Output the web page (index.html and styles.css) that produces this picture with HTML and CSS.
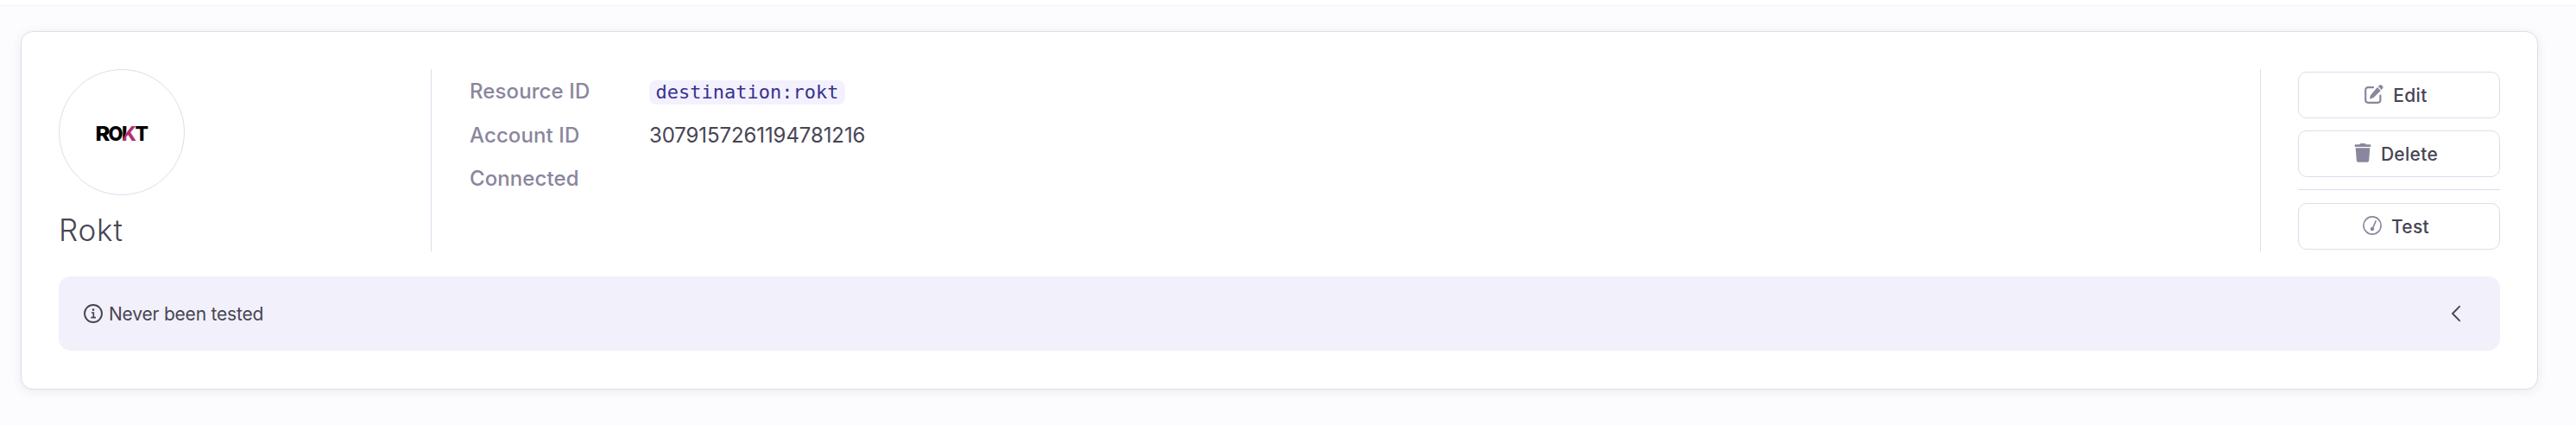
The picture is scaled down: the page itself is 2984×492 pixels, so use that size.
FILE: index.html
```html
<!DOCTYPE html>
<html lang="en">
<head>
    <meta charset="UTF-8">
    <meta name="viewport" content="width=device-width, initial-scale=1.0">
    <title>Rokt</title>
    <link rel="stylesheet" href="styles.css">
</head>
<body>
    <div class="topbar"></div>
    <div class="card">
        <div class="overview">
            <div class="identity">
                <div class="logo">
                    <svg width="80" height="40" viewBox="0 0 80 40">
                        <defs>
                            <linearGradient id="k" gradientUnits="userSpaceOnUse" x1="42" y1="18" x2="53" y2="22">
                                <stop offset="0" stop-color="#000"/>
                                <stop offset="0.24" stop-color="#000"/>
                                <stop offset="0.34" stop-color="#b0306e"/>
                            </linearGradient>
                        </defs>
                        <text class="logo-text" x="9.500" y="29.500" textLength="17" lengthAdjust="spacingAndGlyphs">R</text>
                        <text class="logo-text" x="24.500" y="29.500" textLength="17" lengthAdjust="spacingAndGlyphs">O</text>
                        <text class="logo-text" x="40" y="29.500" textLength="17" lengthAdjust="spacingAndGlyphs" fill="url(#k)">K</text>
                        <text class="logo-text" x="55.500" y="29.500" textLength="15.500" lengthAdjust="spacingAndGlyphs">T</text>
                    </svg>
                </div>
                <h1>Rokt</h1>
            </div>
            <div class="details">
                <div class="row">
                    <span class="label">Resource ID</span>
                    <code>destination:rokt</code>
                </div>
                <div class="row">
                    <span class="label">Account ID</span>
                    <span class="value">3079157261194781216</span>
                </div>
                <div class="row">
                    <span class="label">Connected</span>
                </div>
            </div>
            <div class="actions">
                <button>
                    <svg width="22" height="22" viewBox="0 0 22 22">
                        <path d="M10 3.200H4.200A3 3 0 0 0 1.200 6.200V17.800a3 3 0 0 0 3 3H15.400a3 3 0 0 0 3-3V12.500" fill="none" stroke="currentColor" stroke-width="2.200" stroke-linecap="round"/>
                        <path d="M14.800 3.100l4 4-8 7.700q-1.700 1.200-4.800 1.700q.4-3.500 1.600-5z"/>
                        <path d="M15.800 2.100l1.100-1.100a2.400 2.400 0 0 1 3.400 0l.4.4a2.400 2.400 0 0 1 0 3.400l-1 1.100z"/>
                    </svg>
                    <span>Edit</span>
                </button>
                <button>
                    <svg width="20" height="22" viewBox="0 0 20 22">
                        <path d="M1.500 1.300H6L7 .3Q7.300 0 8 0H12Q12.700 0 13 .3L14 1.300H18.500Q19.300 1.300 19.300 2.200V3.200Q19.300 4 18.500 4H1.500Q.7 4 .7 3.200V2.200Q.7 1.300 1.500 1.300zM1.700 5.300H18.300L17.200 19.800Q17 21.800 15 21.800H5Q3 21.800 2.800 19.800z"/>
                    </svg>
                    <span>Delete</span>
                </button>
                <div class="separator"></div>
                <button>
                    <svg width="22" height="22" viewBox="0 0 22 22">
                        <circle cx="11" cy="11" r="10.100" fill="none" stroke="currentColor" stroke-width="1.600"/>
                        <path d="M11.500 14.500L15 6" stroke="currentColor" stroke-width="1.700" stroke-linecap="round"/>
                        <circle cx="11" cy="15" r="2.200"/>
                    </svg>
                    <span>Test</span>
                </button>
            </div>
        </div>
        <div class="status">
            <svg width="22" height="22" viewBox="0 0 22 22">
                <circle cx="11" cy="11" r="10" fill="none" stroke="currentColor" stroke-width="1.900"/>
                <circle cx="11" cy="6.600" r="1.300"/>
                <path d="M8.900 10H11.300V15.500M8.300 15.600H14" fill="none" stroke="currentColor" stroke-width="1.700"/>
            </svg>
            <span class="message">Never been tested</span>
            <svg width="12" height="20" viewBox="0 0 12 20">
                <path d="M10 1.800L2 10l8 8.200" fill="none" stroke="currentColor" stroke-width="1.900" stroke-linecap="round" stroke-linejoin="round"/>
            </svg>
        </div>
    </div>
</body>
</html>
```
FILE: styles.css
```css
* {
    box-sizing: border-box;
}

body {
    margin: 0;
    height: 492px;
    background: #fcfcfe;
    font-family: Inter, "Liberation Sans", sans-serif;
    color: #474554;
    overflow: hidden;
}

.topbar {
    height: 7px;
    background: #fff;
    border-bottom: 1px solid #f2f0fa;
}

.card {
    height: 415px;
    margin: 29px 44px 0 24px;
    padding: 43px;
    background: #fff;
    border: 1px solid #dfdcec;
    border-radius: 14px;
    box-shadow: 0 2px 12px rgba(71, 69, 84, 0.09);
}

.overview {
    display: flex;
    height: 211px;
}

.identity {
    width: 432px;
    border-right: 1px solid #dfdcec;
}

.logo {
    display: flex;
    align-items: center;
    justify-content: center;
    width: 146px;
    height: 146px;
    border: 1px solid #e0ddee;
    border-radius: 50%;
}

.logo-text {
    font-size: 23px;
    font-weight: 800;
}

h1 {
    margin: 18px 0 0 0;
    font-size: 35px;
    line-height: 44px;
    font-weight: 350;
    letter-spacing: 0.8px;
}

.details {
    flex: 1;
    padding: 1px 44px 0;
}

.row {
    display: flex;
    align-items: center;
    height: 50.5px;
    font-size: 24px;
}

.label {
    width: 208px;
    color: #8a869d;
    font-weight: 500;
    line-height: 30px;
    letter-spacing: 0.1px;
}

.value {
    letter-spacing: -0.1px;
}

code {
    height: 28px;
    margin-top: 2px;
    padding: 0 7.5px;
    background: #f3f1fe;
    border-radius: 8px;
    color: #38328f;
    font-family: "DejaVu Sans Mono", monospace;
    font-size: 22px;
    line-height: 28px;
}

.actions {
    display: flex;
    flex-direction: column;
    width: 278px;
    padding: 3px 0 0 43px;
    border-left: 1px solid #dfdcec;
}

button {
    display: flex;
    flex: none;
    align-items: center;
    justify-content: center;
    gap: 11px;
    height: 54px;
    margin: 0 0 14px;
    padding: 0 7px 0 0;
    background: #fff;
    border: 1px solid #dfdcec;
    border-radius: 10px;
    color: #474554;
    font-family: inherit;
    font-size: 21px;
    font-weight: 500;
    letter-spacing: 0.3px;
}

button:last-child {
    margin-bottom: 0;
}

.separator {
    height: 1px;
    margin-bottom: 15px;
    background: #dfdcec;
}

svg {
    flex: none;
    fill: currentColor;
}

button svg {
    margin-bottom: 2px;
    color: #8a869d;
}

.logo svg {
    color: #000;
}

.status {
    display: flex;
    align-items: center;
    height: 86px;
    margin-top: 29px;
    padding: 0 45px 0 29px;
    background: #f2f0fa;
    border-radius: 14px;
    font-size: 21px;
    letter-spacing: -0.2px;
}

.message {
    flex: 1;
    margin-left: 7px;
}
```
